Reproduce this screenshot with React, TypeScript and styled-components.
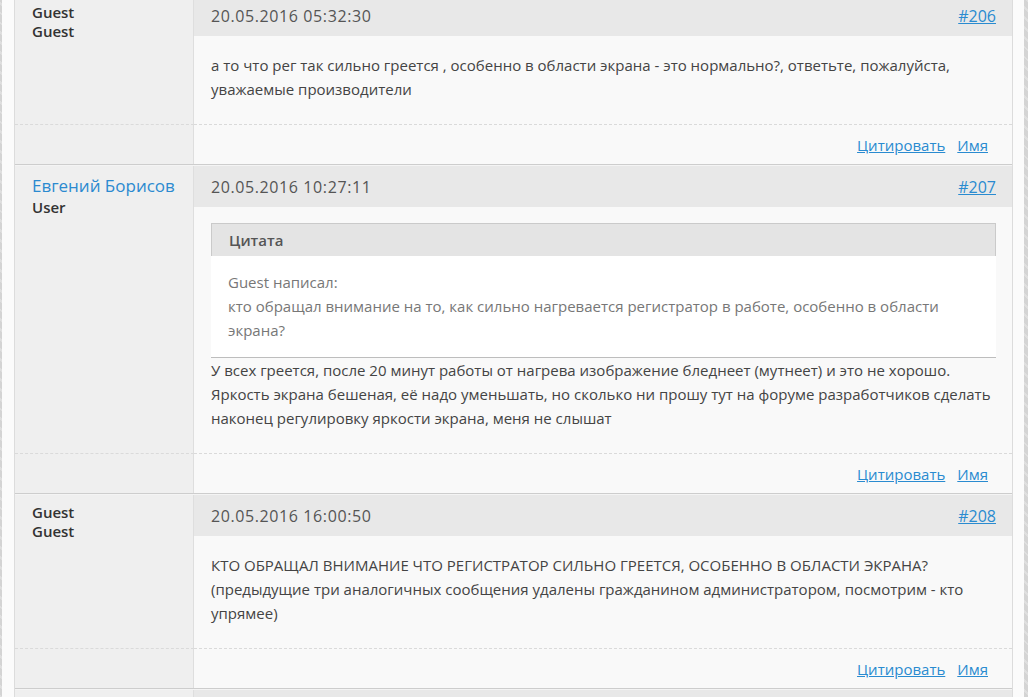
import React from 'react';
import styled, { createGlobalStyle } from 'styled-components';

const GlobalStyle = createGlobalStyle`
  html, body {
    margin: 0;
    padding: 0;
    overflow: hidden;
  }
  body {
    font-family: "Open Sans", "Noto Sans", sans-serif;
    background: #d6d6d6;
  }
`;

const Page = styled.div`
  height: 697px;
  overflow: hidden;
  padding: 0 4px 0 2px;
  background:
    repeating-linear-gradient(45deg, rgba(255,255,255,0.25) 0 2px, transparent 2px 7px),
    #d4d4d4;
`;

const Panel = styled.div`
  background: #fbfbfb;
  padding: 0 11px 0 12px;
  height: 100%;
  overflow: hidden;
`;

const Thread = styled.div`
  margin-top: -7px;
  border-left: 1px solid #dcdcdc;
  border-right: 1px solid #dcdcdc;
`;

const Post = styled.div`
  display: grid;
  grid-template-columns: 179px 1fr;
  grid-template-rows: 41px auto 40px;
  border-top: 1px solid #cdcdcd;
  box-shadow: inset 0 1px 0 #f4f4f4;
  padding-top: 1px;
`;

const Author = styled.div`
  grid-row: 1 / 3;
  background: #efefef;
  border-right: 1px solid #dedede;
  padding: 8px 10px 0 17px;
`;

const AuthorName = styled.div<{ $link?: boolean }>`
  font-size: ${p => (p.$link ? '17px' : '15px')};
  line-height: ${p => (p.$link ? '24px' : '19px')};
  font-weight: ${p => (p.$link ? 400 : 600)};
  color: ${p => (p.$link ? '#2b8ad0' : '#333')};
`;

const AuthorRole = styled.div`
  font-size: 15px;
  line-height: 19px;
  font-weight: 600;
  color: #333;
`;

const Header = styled.div`
  background: #e8e8e8;
  display: flex;
  align-items: center;
  justify-content: space-between;
  padding: 0 16px 0 17px;
`;

const Date = styled.span`
  font-size: 16px;
  color: #555;
  letter-spacing: 0.6px;
`;

const Link = styled.a<{ $big?: boolean }>`
  color: #2a8bd0;
  text-decoration: underline;
  font-size: ${p => (p.$big ? '16px' : '15px')};
  cursor: pointer;
`;

const Body = styled.div<{ $tall?: boolean }>`
  background: #f9f9f9;
  padding: 17px 16px 23px 17px;
  font-size: 15px;
  line-height: 24px;
  color: #444;
  min-height: ${p => (p.$tall ? '200px' : '0')};
`;

const Quote = styled.div`
  background: #fff;
  border-bottom: 1px solid #bdbdbd;
  margin-top: -1px;
`;

const QuoteTitle = styled.div`
  background: #e4e4e4;
  border: 1px solid #cacaca;
  border-bottom: none;
  height: 32px;
  display: flex;
  align-items: center;
  padding-left: 17px;
  font-size: 15px;
  font-weight: 600;
  color: #555;
`;

const QuoteText = styled.div`
  padding: 14px 17px 15px;
  color: #777;
`;

const FooterSpacer = styled.div`
  background: #efefef;
  border-top: 1px dashed #dadada;
  border-right: 1px solid #dedede;
`;

const Footer = styled.div`
  background: #f9f9f9;
  border-top: 1px dashed #dadada;
  display: flex;
  align-items: center;
  justify-content: flex-end;
  gap: 12px;
  padding-right: 24px;
`;

type PostData = {
  name: string;
  role: string;
  member?: boolean;
  date: string;
  num: string;
  quote?: { who: string; text: string };
  text: string;
};

const posts: PostData[] = [
  {
    name: 'Guest',
    role: 'Guest',
    date: '20.05.2016 05:32:30',
    num: '#206',
    text: 'а то что рег так сильно греется , особенно в области экрана - это нормально?, ответьте, пожалуйста, уважаемые производители',
  },
  {
    name: 'Евгений Борисов',
    role: 'User',
    member: true,
    date: '20.05.2016 10:27:11',
    num: '#207',
    quote: {
      who: 'Guest написал:',
      text: 'кто обращал внимание на то, как сильно нагревается регистратор в работе, особенно в области экрана?',
    },
    text: 'У всех греется, после 20 минут работы от нагрева изображение бледнеет (мутнеет) и это не хорошо. Яркость экрана бешеная, её надо уменьшать, но сколько ни прошу тут на форуме разработчиков сделать наконец регулировку яркости экрана, меня не слышат',
  },
  {
    name: 'Guest',
    role: 'Guest',
    date: '20.05.2016 16:00:50',
    num: '#208',
    text: 'КТО ОБРАЩАЛ ВНИМАНИЕ ЧТО РЕГИСТРАТОР СИЛЬНО ГРЕЕТСЯ, ОСОБЕННО В ОБЛАСТИ ЭКРАНА? (предыдущие три аналогичных сообщения удалены гражданином администратором, посмотрим - кто упрямее)',
  },
];

export default function App() {
  return (
    <>
      <GlobalStyle />
      <Page>
        <Panel>
          <Thread>
            {posts.map(p => (
              <Post key={p.num}>
                <Author>
                  <AuthorName $link={p.member}>{p.name}</AuthorName>
                  <AuthorRole>{p.role}</AuthorRole>
                </Author>
                <Header>
                  <Date>{p.date}</Date>
                  <Link $big>{p.num}</Link>
                </Header>
                <Body>
                  {p.quote && (
                    <Quote>
                      <QuoteTitle>Цитата</QuoteTitle>
                      <QuoteText>
                        {p.quote.who}
                        <br />
                        {p.quote.text}
                      </QuoteText>
                    </Quote>
                  )}
                  {p.text}
                </Body>
                <FooterSpacer />
                <Footer>
                  <Link>Цитировать</Link>
                  <Link>Имя</Link>
                </Footer>
              </Post>
            ))}
            <Post>
              <Author />
              <Header />
              <Body $tall />
            </Post>
          </Thread>
        </Panel>
      </Page>
    </>
  );
}
